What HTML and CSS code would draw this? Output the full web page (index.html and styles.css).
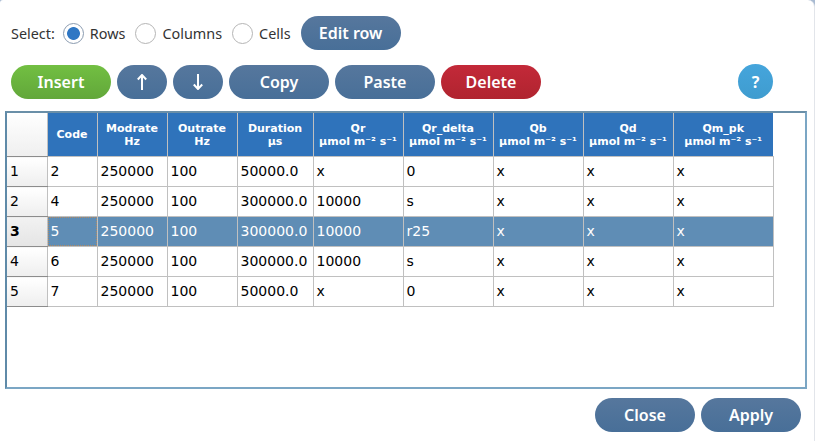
FILE: index.html
```html
<!DOCTYPE html>
<html lang="en">
<head>
<meta charset="utf-8">
<title>Edit table</title>
<link rel="stylesheet" href="styles.css">
</head>
<body>
<div class="dialog">
  <div class="select-row">
    <span class="select-label">Select:</span>
    <label class="radio-item"><span class="radio checked"></span>Rows</label>
    <label class="radio-item"><span class="radio"></span>Columns</label>
    <label class="radio-item"><span class="radio"></span>Cells</label>
    <button class="btn blue">Edit row</button>
  </div>
  <div class="tool-row">
    <button class="btn green">Insert</button>
    <button class="btn blue small" aria-label="Up"><svg width="10" height="16" viewBox="0 0 10 16"><path d="M5 16V1.500M.8 5.500 5 1l4.200 4.500" fill="none" stroke="#fff" stroke-width="2"/></svg></button>
    <button class="btn blue small" aria-label="Down"><svg width="10" height="16" viewBox="0 0 10 16"><path d="M5 0v14.500M.8 10.500 5 15l4.200-4.500" fill="none" stroke="#fff" stroke-width="2"/></svg></button>
    <button class="btn blue">Copy</button>
    <button class="btn blue">Paste</button>
    <button class="btn red">Delete</button>
    <button class="help">?</button>
  </div>
  <div class="frame">
    <table class="grid">
      <colgroup>
        <col class="c-head"><col class="c-code"><col class="c-rate"><col class="c-rate"><col class="c-dur"><col class="c-q"><col class="c-q"><col class="c-q"><col class="c-q"><col class="c-pk">
      </colgroup>
      <thead>
        <tr>
          <th class="corner"></th>
          <th>Code</th>
          <th>Modrate<br>Hz</th>
          <th>Outrate<br>Hz</th>
          <th>Duration<br>µs</th>
          <th>Qr<br>µmol m⁻² s⁻¹</th>
          <th>Qr_delta<br>µmol m⁻² s⁻¹</th>
          <th>Qb<br>µmol m⁻² s⁻¹</th>
          <th>Qd<br>µmol m⁻² s⁻¹</th>
          <th>Qm_pk<br>µmol m⁻² s⁻¹</th>
        </tr>
      </thead>
      <tbody>
        <tr><td class="rh">1</td><td>2</td><td>250000</td><td>100</td><td>50000.0</td><td>x</td><td>0</td><td>x</td><td>x</td><td>x</td></tr>
        <tr><td class="rh">2</td><td>4</td><td>250000</td><td>100</td><td>300000.0</td><td>10000</td><td>s</td><td>x</td><td>x</td><td>x</td></tr>
        <tr class="sel"><td class="rh">3</td><td class="cur">5</td><td>250000</td><td>100</td><td>300000.0</td><td>10000</td><td>r25</td><td>x</td><td>x</td><td>x</td></tr>
        <tr><td class="rh">4</td><td>6</td><td>250000</td><td>100</td><td>300000.0</td><td>10000</td><td>s</td><td>x</td><td>x</td><td>x</td></tr>
        <tr><td class="rh">5</td><td>7</td><td>250000</td><td>100</td><td>50000.0</td><td>x</td><td>0</td><td>x</td><td>x</td><td>x</td></tr>
      </tbody>
    </table>
  </div>
  <div class="foot-row">
    <button class="btn blue">Close</button>
    <button class="btn blue">Apply</button>
  </div>
</div>
</body>
</html>
```
FILE: styles.css
```css
html, body { margin: 0; padding: 0; }
body {
  width: 815px; height: 441px; overflow: hidden;
  background: linear-gradient(#a9bbd2 0 10px, #fff 10px);
}
.dialog {
  box-sizing: border-box;
  width: 815px;
  height: 441px;
  padding: 16px 8px 0 5px;
  background: #fff;
  border-right: 1px solid #e2e5ea;
  border-radius: 3px 7px 0 0;
  font-family: "Noto Sans", "Open Sans", sans-serif;
  color: #333;
}
.select-row { display: flex; align-items: center; height: 34px; padding-left: 6px; font-size: 14.4px; }
.select-label { margin-right: 8px; }
.radio-item { display: flex; align-items: center; gap: 6px; margin-right: 10px; }
.radio {
  box-sizing: border-box;
  width: 21px; height: 21px;
  border: 1px solid #b5b5b5;
  border-radius: 50%;
  background: #fff;
}
.radio.checked { background: radial-gradient(circle, #2f77c4 0 6px, #fff 6.8px); border-color: #8a9bb0; }
.btn {
  width: 100px; height: 34px;
  border: 0;
  border-radius: 17px;
  padding: 0;
  color: #fff;
  font: 600 16px "Noto Sans", "Open Sans", sans-serif;
  display: flex; align-items: center; justify-content: center;
}
.btn.small { width: 50px; }
.blue { background: linear-gradient(#56779d, #486f98); }
.green { background: linear-gradient(#72bf42, #62a73a); }
.red { background: linear-gradient(#c32939, #b0242f); }
.tool-row { display: flex; align-items: center; gap: 6px; height: 35px; margin-top: 14px; padding-left: 6px; }
.tool-row .btn { align-self: flex-end; }
.help {
  width: 35px; height: 35px;
  margin-left: 191px;
  border: 0; border-radius: 50%;
  padding: 0;
  background: linear-gradient(#45a5dc, #3f9ccf);
  color: #fff;
  font: 700 16px "Noto Sans", "Open Sans", sans-serif;
}
.frame {
  box-sizing: border-box;
  width: 802px; height: 278px;
  margin-top: 12px;
  border: 2px solid #7ba6c4;
  border-top-color: #6a8fa8;
  border-left-color: #5f8aa8;
  background: #fff;
}
.grid {
  border-collapse: collapse;
  table-layout: fixed;
  width: 766px;
  font-family: "DejaVu Sans", sans-serif;
  font-size: 14px;
  color: #000;
}
.c-head { width: 40px; }
.c-code { width: 50px; }
.c-rate { width: 70px; }
.c-dur { width: 76px; }
.c-q { width: 90px; }
.c-pk { width: 100px; }
.grid th {
  height: 43px;
  padding: 0;
  background: #2f73bb;
  color: #fff;
  font-size: 11px;
  font-weight: 700;
  line-height: 13px;
  text-align: center;
  border: 1px solid #c0c0c0;
  border-top: 0;
}
.grid th:last-child { border-right: 0; }
.grid th.corner { background: linear-gradient(#fff, #efefef); border: 0; border-bottom: 1px solid #8c8c8c; }
.grid td {
  box-sizing: border-box;
  height: 30px;
  padding: 0 2px 1px 3px;
  border: 1px solid #c0c0c0;
  line-height: 16px;
  white-space: nowrap;
  overflow: hidden;
}
.grid td.rh {
  padding-left: 3px;
  background: linear-gradient(#fff, #eee);
  border: 0;
  border-bottom: 1px solid #8c8c8c;
  border-right: 1px solid #c0c0c0;
}
.sel td { background: #5f8db5; color: #fff; }
.sel td.rh { color: #000; font-weight: 700; background: linear-gradient(#f2f2f2, #e4e4e4); }
.sel td.cur { position: relative; }
.sel td.cur::after {
  content: "";
  position: absolute;
  inset: 0;
  border: 1px dotted #b08a64;
}
.foot-row { display: flex; justify-content: flex-end; gap: 6px; margin-top: 9px; padding-right: 5px; }
```
